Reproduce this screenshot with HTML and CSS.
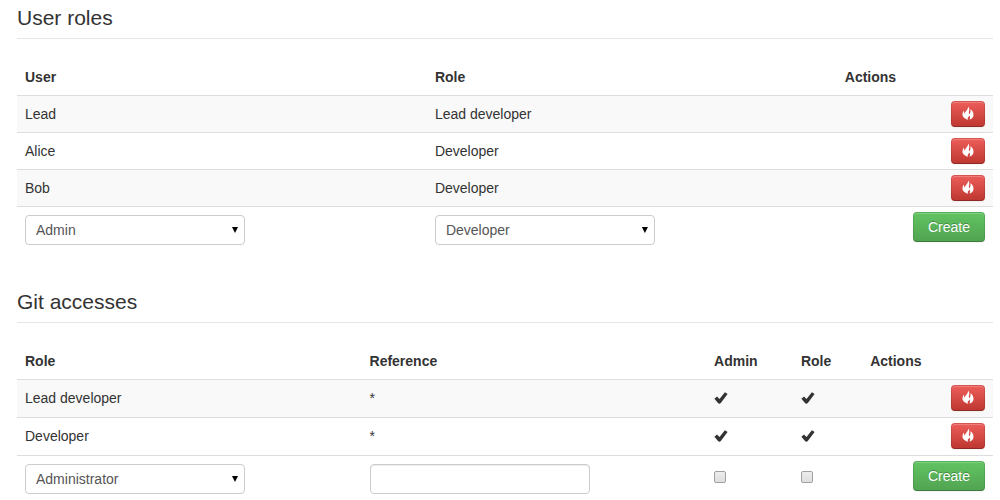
FILE: index.html
```html
<!DOCTYPE html>
<html lang="en">
<head>
<meta charset="utf-8">
<title>Project access</title>
<link rel="stylesheet" href="styles.css">
</head>
<body>
<svg class="sprite" aria-hidden="true">
  <symbol id="fire" viewBox="0 0 12 14">
    <path d="M6.2 0.4C7.4 2 7.6 3.8 7 5.6C6.7 6.8 6.8 7.8 7.4 8.2C8.4 7 8.8 5.4 8.4 3.2C10.4 4.4 11.7 6.6 11.5 9C11.3 11.4 9.8 12.9 7.4 13.6C8.3 12 8.3 10.8 7.4 9.6C7.2 10.6 6.6 11.1 5.8 11.5C5.6 12.2 5.7 12.9 6.1 13.6C4.6 13.4 3.3 12.8 2.4 11.9C1 11 0.4 9.8 0.5 8.2C0.6 6.8 1.2 5.7 2 4.6C2 6 2.2 7 2.8 7.8C3 5 6.2 3.8 6.2 0.4Z"/>
  </symbol>
  <symbol id="check" viewBox="0 0 14 12">
    <path d="M0.4 6.7L3 4.6L5.5 6.9L10.9 0.3L13.6 2.1L7 10.8C6 11.9 4.9 12 4 11Z"/>
  </symbol>
</svg>
<main class="page">
  <section class="panel">
    <h2 class="legend">User roles</h2>
    <table class="table">
      <colgroup><col class="half"><col class="half"><col></colgroup>
      <thead>
        <tr><th>User</th><th>Role</th><th>Actions</th></tr>
      </thead>
      <tbody>
        <tr><td>Lead</td><td>Lead developer</td><td class="actions"><button class="btn btn-danger" type="button" aria-label="Delete Lead"><svg class="icon-fire"><use href="#fire"/></svg></button></td></tr>
        <tr><td>Alice</td><td>Developer</td><td class="actions"><button class="btn btn-danger" type="button" aria-label="Delete Alice"><svg class="icon-fire"><use href="#fire"/></svg></button></td></tr>
        <tr><td>Bob</td><td>Developer</td><td class="actions"><button class="btn btn-danger" type="button" aria-label="Delete Bob"><svg class="icon-fire"><use href="#fire"/></svg></button></td></tr>
        <tr>
          <td><div class="select"><select class="field" aria-label="User"><option>Admin</option></select></div></td>
          <td><div class="select"><select class="field" aria-label="Role"><option>Developer</option></select></div></td>
          <td class="actions"><button class="btn btn-success" type="button">Create</button></td>
        </tr>
      </tbody>
    </table>
  </section>
  <section class="panel">
    <h2 class="legend">Git accesses</h2>
    <table class="table table-git">
      <colgroup><col class="wide"><col class="wide"><col class="admin"><col class="role"><col></colgroup>
      <thead>
        <tr><th>Role</th><th>Reference</th><th>Admin</th><th>Role</th><th>Actions</th></tr>
      </thead>
      <tbody>
        <tr><td>Lead developer</td><td>*</td><td><svg class="icon-check" role="img" aria-label="Yes"><use href="#check"/></svg></td><td><svg class="icon-check" role="img" aria-label="Yes"><use href="#check"/></svg></td><td class="actions"><button class="btn btn-danger" type="button" aria-label="Delete Lead developer access"><svg class="icon-fire"><use href="#fire"/></svg></button></td></tr>
        <tr><td>Developer</td><td>*</td><td><svg class="icon-check" role="img" aria-label="Yes"><use href="#check"/></svg></td><td><svg class="icon-check" role="img" aria-label="Yes"><use href="#check"/></svg></td><td class="actions"><button class="btn btn-danger" type="button" aria-label="Delete Developer access"><svg class="icon-fire"><use href="#fire"/></svg></button></td></tr>
        <tr>
          <td><div class="select"><select class="field" aria-label="Role"><option>Administrator</option></select></div></td>
          <td><input class="field field-text" type="text" aria-label="Reference"></td>
          <td><input class="check" type="checkbox" aria-label="Admin"></td>
          <td><input class="check" type="checkbox" aria-label="Role access"></td>
          <td class="actions"><button class="btn btn-success" type="button">Create</button></td>
        </tr>
      </tbody>
    </table>
  </section>
</main>
</body>
</html>
```
FILE: styles.css
```css
* { box-sizing: border-box; }

html { scrollbar-width: none; }

body {
  margin: 0;
  background: #fff;
  color: #333;
  font: 14px/20px "Liberation Sans", Arial, sans-serif;
}

.sprite { display: none; }

.page {
  display: flex;
  flex-direction: column;
  gap: 30px;
  padding: 0 7px 0 17px;
}

.legend {
  margin: 0 0 20px;
  padding-bottom: 2px;
  border-bottom: 1px solid #e5e5e5;
  font-size: 21px;
  font-weight: normal;
  line-height: 36px;
}

.table {
  width: 100%;
  table-layout: fixed;
  border-spacing: 0;
}

.half { width: 42%; }
.wide { width: 35.3%; }
.admin { width: 8.9%; }
.role { width: 7.1%; }

.table th,
.table td {
  padding: 8px;
  text-align: left;
  vertical-align: top;
}

.table td { border-top: 1px solid #ddd; }
.table tbody tr:nth-child(odd):not(:last-child) td { background: #f9f9f9; }
.table-git tbody tr { height: 38px; }
.table td.actions {
  padding: 5px 8px;
  text-align: right;
}

.btn {
  display: inline-flex;
  align-items: center;
  justify-content: center;
  vertical-align: top;
  border: 1px solid;
  border-radius: 4px;
  color: #fff;
  font: inherit;
  text-shadow: 0 -1px 0 rgba(0, 0, 0, 0.25);
  box-shadow: inset 0 1px 0 rgba(255, 255, 255, 0.2), 0 1px 2px rgba(0, 0, 0, 0.05);
  cursor: pointer;
}

.btn-danger {
  height: 26px;
  padding: 0 10px 2px;
  background: linear-gradient(#ee5f5b, #bd362f) border-box;
  border-color: rgba(0, 0, 0, 0.1) rgba(0, 0, 0, 0.1) rgba(0, 0, 0, 0.25);
}

.btn-success {
  height: 30px;
  padding: 4px 14px;
  background: linear-gradient(#62c462, #51a351) border-box;
  border-color: rgba(0, 0, 0, 0.1) rgba(0, 0, 0, 0.1) rgba(0, 0, 0, 0.25);
}

.icon-fire {
  display: block;
  width: 12px;
  height: 14px;
  fill: currentColor;
}

.icon-check {
  display: block;
  width: 14px;
  height: 12px;
  margin-top: 4px;
  fill: currentColor;
}

.select {
  position: relative;
  max-width: 220px;
}

.select::after {
  content: "";
  position: absolute;
  top: 12px;
  right: 7px;
  width: 6px;
  height: 6px;
  background: #000;
  clip-path: polygon(0 0, 100% 0, 50% 100%);
  pointer-events: none;
}

.field {
  display: block;
  width: 100%;
  max-width: 220px;
  height: 30px;
  margin: 0 0 1px;
  padding: 4px 10px;
  appearance: none;
  border: 1px solid #ccc;
  border-radius: 4px;
  background: #fff;
  color: #555;
  font: inherit;
}

.field-text { box-shadow: inset 0 1px 1px rgba(0, 0, 0, 0.075); }

.check {
  display: block;
  width: 12px;
  height: 12px;
  margin: 7px 0 0;
  appearance: none;
  border: 1px solid #a0a0a0;
  border-radius: 2px;
  background: linear-gradient(#ededed, #dedede);
}

.check:checked { background: #555; }
```
